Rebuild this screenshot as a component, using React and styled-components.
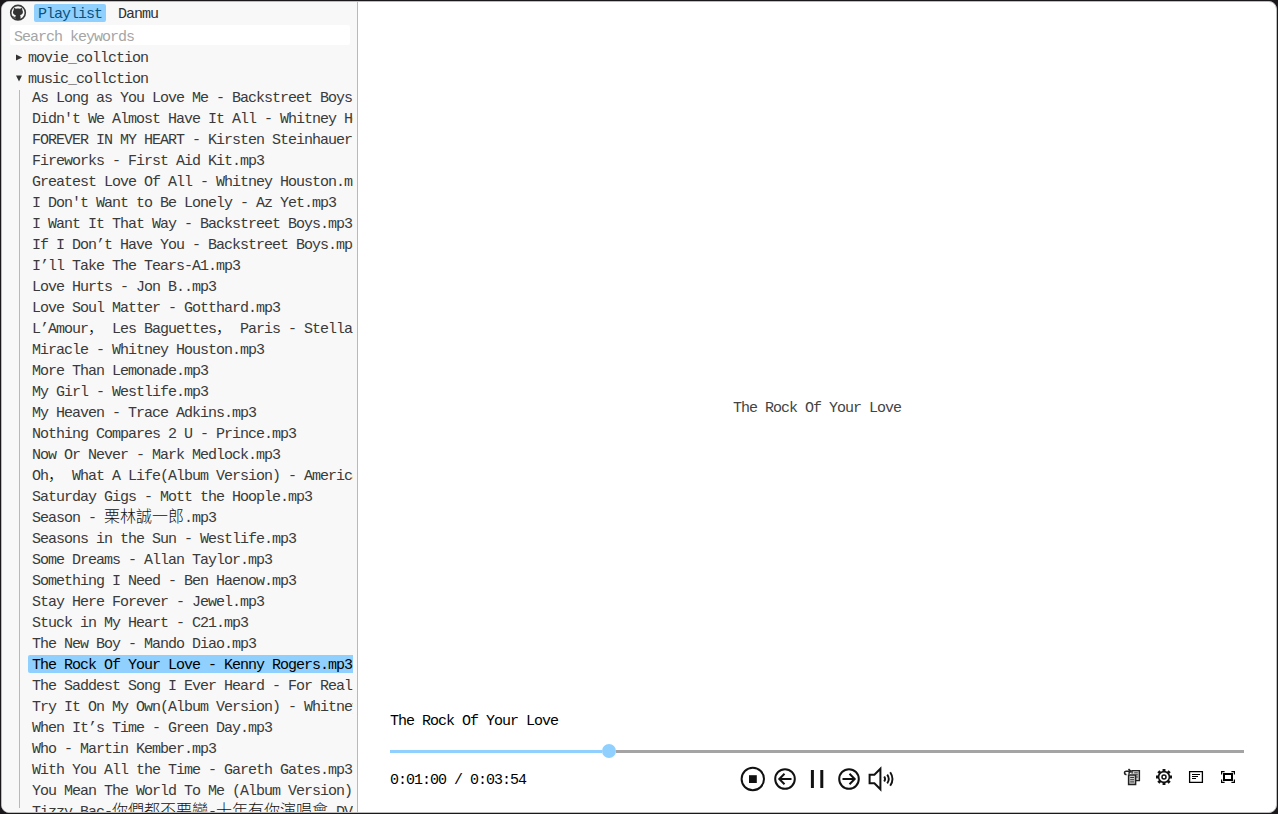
import React from "react";
import styled, { createGlobalStyle } from "styled-components";

const Global = createGlobalStyle`
  * { box-sizing: border-box; }
  html, body { margin: 0; height: 100%; background: #1a181b; overflow: hidden; }
  body {
    font-family: "Liberation Mono", "Noto Sans CJK SC", monospace;
    font-size: 15px;
    letter-spacing: -1px;
    line-height: 18px;
    color: #3a3a3a;
  }
`;

const Window = styled.div`
  display: flex;
  width: 1276px;
  height: 812px;
  margin: 1px;
  border: 1px solid #bcbcbc;
  border-radius: 8px;
  overflow: hidden;
  background: #fff;
`;

const Sidebar = styled.aside`
  display: flex;
  flex-direction: column;
  flex: none;
  width: 356px;
  border-right: 1px solid #b9b9b9;
  background: #f8f8f8;
  overflow: hidden;
`;

const Header = styled.header`
  display: flex;
  align-items: flex-start;
  height: 23px;
  padding: 2px 0 0 7px;
  svg { display: block; margin-right: 7px; }
`;

const Tab = styled.button`
  display: flex;
  align-items: flex-start;
  height: 18px;
  padding: 2px 4px 0;
  margin-right: 8px;
  border: 0;
  border-radius: 2px;
  font: inherit;
  line-height: 18px;
  letter-spacing: inherit;
  white-space: nowrap;
  background: ${(p) => (p.$active ? "#90d0ff" : "transparent")};
  color: ${(p) => (p.$active ? "#08527d" : "#333")};
`;

const Search = styled.input`
  width: 340px;
  height: 20px;
  flex: none;
  margin: 0 0 4px 8px;
  padding: 4px 4px 0;
  border: 0;
  border-radius: 2px;
  outline: 0;
  background: #fff;
  font: inherit;
  line-height: 16px;
  letter-spacing: inherit;
  &::placeholder { color: #a5a5a5; opacity: 1; }
`;

const Folder = styled.div`
  display: flex;
  flex: none;
  align-items: center;
  height: 18px;
  margin-bottom: 3px;
  padding-left: 13px;
  svg { margin: -1px 5px 0 0; }
  span { padding-top: 2px; }
`;

const Tree = styled.ul`
  flex: none;
  display: flex;
  flex-direction: column;
  gap: 3px;
  width: 334px;
  height: 718px;
  margin: -1px 0 0 17px;
  padding: 0 0 0 8px;
  list-style: none;
  border-left: 1px solid #b9b9b9;
`;

const Song = styled.li`
  flex: none;
  width: 325px;
  height: 18px;
  padding: 2px 0 0 4px;
  position: relative;
  top: -2px;
  border-radius: 2px 0 0 2px;
  overflow: hidden;
  white-space: pre;
  line-height: 18px;
  background: ${(p) => (p.$active ? "#90d0ff" : "transparent")};
  color: ${(p) => (p.$active ? "#000" : "#3a3a3a")};
`;

const Wide = styled.span`
  font-family: "Noto Sans CJK SC", sans-serif;
  font-size: 16px;
  font-weight: 300;
  line-height: 10px;
  letter-spacing: 0;
  color: #111;
`;

const Player = styled.main`
  display: flex;
  flex-direction: column;
  flex: 1;
  padding: 0 32px;
`;

const Stage = styled.section`
  display: flex;
  flex: none;
  align-items: center;
  justify-content: center;
  height: 710px;
  padding-top: 104px;
  color: #444;
`;

const Title = styled.div`
  height: 18px;
  margin-top: 1px;
  color: #000;
`;

const Track = styled.div`
  display: flex;
  align-items: center;
  height: 14px;
  margin-top: 13px;
`;

const Played = styled.div`
  width: 212px;
  height: 3px;
  background: #90d0ff;
`;

const Knob = styled.div`
  width: 14px;
  height: 14px;
  border-radius: 50%;
  background: #90d0ff;
`;

const Remaining = styled.div`
  flex: 1;
  height: 3px;
  background: #a4a4a4;
`;

const Controls = styled.footer`
  display: grid;
  grid-template-columns: 346px 1fr 124px;
  height: 42px;
  color: #000;
`;

const Time = styled.div`
  padding-top: 14px;
`;

const Buttons = styled.div`
  display: flex;
  gap: ${(p) => p.$gap || 0}px;
  padding: ${(p) => p.$pad};
  svg { display: block; flex: none; }
`;

const songs = [
  "As Long as You Love Me - Backstreet Boys.mp3",
  "Didn't We Almost Have It All - Whitney Houston.mp3",
  "FOREVER IN MY HEART - Kirsten Steinhauer.mp3",
  "Fireworks - First Aid Kit.mp3",
  "Greatest Love Of All - Whitney Houston.mp3",
  "I Don't Want to Be Lonely - Az Yet.mp3",
  "I Want It That Way - Backstreet Boys.mp3",
  "If I Don’t Have You - Backstreet Boys.mp3",
  "I’ll Take The Tears-A1.mp3",
  "Love Hurts - Jon B..mp3",
  "Love Soul Matter - Gotthard.mp3",
  "L’Amour， Les Baguettes， Paris - Stella.mp3",
  "Miracle - Whitney Houston.mp3",
  "More Than Lemonade.mp3",
  "My Girl - Westlife.mp3",
  "My Heaven - Trace Adkins.mp3",
  "Nothing Compares 2 U - Prince.mp3",
  "Now Or Never - Mark Medlock.mp3",
  "Oh， What A Life(Album Version) - American.mp3",
  "Saturday Gigs - Mott the Hoople.mp3",
  "Season - 栗林誠一郎.mp3",
  "Seasons in the Sun - Westlife.mp3",
  "Some Dreams - Allan Taylor.mp3",
  "Something I Need - Ben Haenow.mp3",
  "Stay Here Forever - Jewel.mp3",
  "Stuck in My Heart - C21.mp3",
  "The New Boy - Mando Diao.mp3",
  "The Rock Of Your Love - Kenny Rogers.mp3",
  "The Saddest Song I Ever Heard - For Real.mp3",
  "Try It On My Own(Album Version) - Whitney.mp3",
  "When It’s Time - Green Day.mp3",
  "Who - Martin Kember.mp3",
  "With You All the Time - Gareth Gates.mp3",
  "You Mean The World To Me (Album Version).mp3",
  "Tizzy Bac-你們都不要變-十年有你演唱會.DVD",
];

// Full-width characters take exactly two columns of the monospaced grid.
const withWide = (text) =>
  text
    .split(/([\u3000-\u9fff\uff00-\uffef]+)/)
    .map((part, i) => (i % 2 ? <Wide key={i}>{part}</Wide> : part));

const Github = () => (
  <svg width="18" height="18" viewBox="0 0 18 18">
    <circle cx="9" cy="8.7" r="7.3" fill="#f8f8f8" stroke="#3a3a3a" strokeWidth="1.6" />
    <path d="M4.9 3.8 7 4.8c1.3-.3 2.7-.3 4 0l2.1-1 .2 2.3c1.5 2.5.2 4.7-2.2 5.1.5.6.5 1.4.5 4.1-1.6.9-3.7.9-5.3 0v-1.5c-1.7.3-2-.5-2.7-1.7 1 0 1.3 1 2.7.8.1-.8.3-1.2.6-1.6-2.6-.4-3.7-2.7-2.2-5.2z" fill="#333" />
  </svg>
);

const Arrow = ({ open }) => (
  <svg width="8" height="10" viewBox="0 0 8 10">
    <path d={open ? "M1 1.5h6L4 7.5z" : "M1 1.5v6L7.2 4.5z"} fill="#333" />
  </svg>
);

const line = { fill: "none", stroke: "#111", strokeWidth: 2 };

const Stop = () => (
  <svg width="26" height="26" viewBox="0 0 26 26">
    <circle cx="12.8" cy="13" r="11.2" {...line} />
    <path d="M9 9.2h7.8V17H9z" fill="#111" />
  </svg>
);

const Step = ({ back }) => (
  <svg width="26" height="26" viewBox="0 0 26 26">
    <circle cx="13" cy="13" r="9.8" {...line} />
    <path d={back ? "M19.5 13H7.5M12.5 7.8 7.3 13l5.2 5.2" : "M6.5 13h12M13.5 7.8l5.2 5.2-5.2 5.2"} {...line} />
  </svg>
);

const Pause = () => (
  <svg width="26" height="26" viewBox="0 0 26 26">
    <path d="M8.4 4v18M17.8 4v18" {...line} strokeWidth="3" />
  </svg>
);

const Volume = () => (
  <svg width="28" height="26" viewBox="0 0 28 26">
    <path d="M1.6 8.7h4.8l6-6v20.6l-6-6H1.6z" {...line} />
    <path d="M16.2 10.5q1.8 2.5 0 5M19.2 8.6q3.2 4.4 0 8.8M22.2 6.2q4.6 6.8 0 13.6" {...line} strokeWidth="1.9" />
  </svg>
);

const LoopList = () => (
  <svg width="18" height="18" viewBox="0 0 18 18" fill="none" stroke="#222">
    <path d="M9 5.5V2.6h7.4v10h-4" fill="#ccc" strokeWidth="1.4" />
    <path d="M11.2 4.8h3.6M13 6.8h2M13 9h2" stroke="#444" />
    <path d="M5.6 7h7v9.4h-7z" fill="#ccc" strokeWidth="1.5" />
    <path d="M7.2 9.5h3.8M7.2 11.7h3.8M7.2 13.9h3.8" stroke="#333" />
    <path d="M3.5 6.8C.8 6.3 1 3.4 3 3.3h4.6M5.5 1l2.3 2.3-2.3 2.3" strokeWidth="1.6" />
  </svg>
);

const teeth = [0, 45, 90, 135, 180, 225, 270, 315];
const Gear = () => (
  <svg width="18" height="18" viewBox="0 0 18 18" fill="none" stroke="#111">
    <circle cx="9" cy="9" r="5.4" strokeWidth="1.6" />
    {teeth.map((angle) => (
      <path key={angle} transform={`rotate(${angle} 9 9)`} d="M9 1v2.8" strokeWidth="2.9" />
    ))}
    <circle cx="9" cy="9" r="2" strokeWidth="1.5" />
  </svg>
);

const Subtitles = () => (
  <svg width="18" height="18" viewBox="0 0 18 18" fill="none" stroke="#000">
    <path d="M2.6 3.6h12.8v10.8H2.6z" strokeWidth="1.3" />
    <path d="M5 6.5h8M5 8.5h6M5 10.5h4" strokeWidth="1.2" />
  </svg>
);

const Fullscreen = () => (
  <svg width="18" height="18" viewBox="0 0 18 18" fill="none" stroke="#000">
    <path d="M5 6h8v6H5z" strokeWidth="2" />
    <path d="M2.6 6.5V3.6h3M12.4 3.6h3v2.9M2.6 11.5v2.9h3M12.4 14.4h3v-2.9" strokeWidth="1.2" />
  </svg>
);

export default function App() {
  return (
    <>
      <Global />
      <Window>
        <Sidebar>
          <Header>
            <Github />
            <Tab $active>Playlist</Tab>
            <Tab>Danmu</Tab>
          </Header>
          <Search placeholder="Search keywords" />
          <Folder><Arrow /><span>movie_collction</span></Folder>
          <Folder><Arrow open /><span>music_collction</span></Folder>
          <Tree>
            {songs.map((song, i) => (
              <Song key={song} $active={i === 27}>{withWide(song)}</Song>
            ))}
          </Tree>
        </Sidebar>
        <Player>
          <Stage>The Rock Of Your Love</Stage>
          <Title>The Rock Of Your Love</Title>
          <Track><Played /><Knob /><Remaining /></Track>
          <Controls>
            <Time>0:01:00 / 0:03:54</Time>
            <Buttons $gap={6} $pad="8px 0 0 4px">
              <Stop /><Step back /><Pause /><Step /><Volume />
            </Buttons>
            <Buttons $gap={14} $pad="10px 0 0 3px">
              <LoopList /><Gear /><Subtitles /><Fullscreen />
            </Buttons>
          </Controls>
        </Player>
      </Window>
    </>
  );
}
